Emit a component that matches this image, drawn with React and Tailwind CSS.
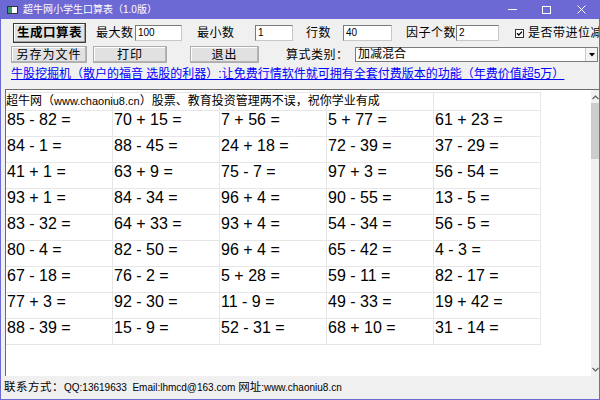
import React from "react";

const rows = [
  ["85 - 82 =", "70 + 15 =", "7 + 56 =", "5 + 77 =", "61 + 23 ="],
  ["84 - 1 =", "88 - 45 =", "24 + 18 =", "72 - 39 =", "37 - 29 ="],
  ["41 + 1 =", "63 + 9 =", "75 - 7 =", "97 + 3 =", "56 - 54 ="],
  ["93 + 1 =", "84 - 34 =", "96 + 4 =", "90 - 55 =", "13 - 5 ="],
  ["83 - 32 =", "64 + 33 =", "93 + 4 =", "54 - 34 =", "56 - 5 ="],
  ["80 - 4 =", "82 - 50 =", "96 + 4 =", "65 - 42 =", "4 - 3 ="],
  ["67 - 18 =", "76 - 2 =", "5 + 28 =", "59 - 11 =", "82 - 17 ="],
  ["77 + 3 =", "92 - 30 =", "11 - 9 =", "49 - 33 =", "19 + 42 ="],
  ["88 - 39 =", "15 - 9 =", "52 - 31 =", "68 + 10 =", "31 - 14 ="],
];

function Btn({ children, className }) {
  return (
    <div
      className={
        "flex items-center justify-center bg-[#e1e1e1] border border-[#adadad] shadow-[inset_-1px_-1px_0_#b4b4b4,inset_1px_1px_0_#fdfdfd] text-[12px] tracking-[1px] shrink-0 " +
        className
      }
    >
      {children}
    </div>
  );
}

function Input({ value, className }) {
  return (
    <div
      className={
        "h-[16px] bg-white border border-[#7a7a7a] border-b-[#c8c8c8] border-r-[#c8c8c8] text-[10px] leading-[14px] pl-[2px] shrink-0 " +
        className
      }
    >
      {value}
    </div>
  );
}

function Label({ children, className }) {
  return (
    <div className={"text-[12px] tracking-[0.5px] whitespace-nowrap shrink-0 " + className}>{children}</div>
  );
}

export default function App() {
  return (
    <div className="w-[600px] h-[400px] bg-[#f0f0f0] border-l border-r border-b border-[#6c68d4] flex flex-col overflow-hidden font-['Liberation_Sans','Noto_Sans_CJK_SC',sans-serif] text-black">
      {/* title bar */}
      <div className="h-[19px] bg-[#6c68d4] flex items-center shrink-0">
        <svg width="11" height="8" viewBox="0 0 11 8" className="ml-[6px] shrink-0">
          <rect x="0.5" y="0.5" width="10" height="7" fill="#fff" stroke="#333" />
          <rect x="1" y="1" width="4" height="6" fill="#3a9a78" />
        </svg>
        <div className="ml-[5px] text-[10px] text-white whitespace-nowrap leading-[12px]">
          超牛网小学生口算表（1.0版）
        </div>
        <div className="ml-auto flex items-center mr-[13px]">
          <div className="w-[9px] h-px bg-white" />
          <div className="ml-[25px] w-[9px] h-[8px] border border-white" />
          <svg width="9" height="9" viewBox="0 0 9 9" className="ml-[26px]">
            <path d="M0.5 0.5 L8.5 8.5 M8.5 0.5 L0.5 8.5" stroke="#fff" strokeWidth="1" />
          </svg>
        </div>
      </div>

      {/* row 1 */}
      <div className="mt-[4px] h-[20px] flex items-center shrink-0">
        <div className="ml-[12px] w-[73px] h-[20px] border border-[#3a3a3a] bg-[#e1e1e1] shadow-[inset_-1px_-1px_0_#a0a0a0,inset_1px_1px_0_#fdfdfd] flex items-center justify-center text-[12.5px] font-bold tracking-[0.5px] shrink-0">
          生成口算表
        </div>
        <Label className="ml-[10px] w-[39px]">最大数</Label>
        <Input value="100" className="w-[47px]" />
        <Label className="ml-[15px] w-[58px]">最小数</Label>
        <Input value="1" className="w-[38px]" />
        <Label className="ml-[13px] w-[37px]">行数</Label>
        <Input value="40" className="w-[49px]" />
        <Label className="ml-[14px] w-[50px]">因子个数</Label>
        <Input value="2" className="w-[43px]" />
        <svg width="9" height="9" viewBox="0 0 9 9" className="ml-[16px] shrink-0">
          <rect x="0.5" y="0.5" width="8" height="8" fill="#fff" stroke="#333" />
          <path d="M2 4.2 L3.8 6 L7 2.6" stroke="#000" strokeWidth="1.3" fill="none" />
        </svg>
        <Label className="ml-[4px]">是否带进位减</Label>
      </div>

      {/* row 2 */}
      <div className="mt-[3px] h-[17px] flex items-center shrink-0">
        <Btn className="ml-[10px] w-[76px] h-[17px]">另存为文件</Btn>
        <Btn className="ml-[6px] w-[74px] h-[17px]">打印</Btn>
        <Btn className="ml-[23px] w-[69px] h-[17px]">退出</Btn>
        <Label className="ml-[27px] w-[69px]">算式类别：</Label>
        <div className="w-[243px] h-[15px] bg-white border border-[#7a7a7a] flex items-center shrink-0">
          <div className="pl-[2px] text-[12px] leading-[13px] flex-1">加减混合</div>
          <div className="w-[12px] h-full bg-[#f4f4f4] border-l border-[#c8c8c8] flex items-center justify-center">
            <svg width="6" height="4" viewBox="0 0 6 4">
              <path d="M0 0 L6 0 L3 3.5 Z" fill="#000" />
            </svg>
          </div>
        </div>
      </div>

      {/* link row */}
      <div className="mt-[3px] h-[15px] flex items-center shrink-0">
        <div className="ml-[10px] text-[12px] leading-[14px] text-[#0000ff] underline whitespace-nowrap">
          牛股挖掘机（散户的福音 选股的利器）:让免费行情软件就可拥有全套付费版本的功能（年费价值超5万）
        </div>
      </div>

      {/* content */}
      <div className="mt-[8px] ml-[4px] h-[287px] w-[594px] border-t border-l border-[#6d6d6d] bg-white flex shrink-0">
        <div className="flex-1 pt-[2px]">
          <div className="w-[535px] border-t border-[#e6e6e6]">
            <div className="grid grid-cols-[107px_107px_107px_107px_107px] h-[18px]">
              <div className="relative border-r border-b border-[#e6e6e6]">
                <div className="absolute left-0 top-0 whitespace-nowrap text-[12px] leading-[17px] z-10">
                  超牛网（<span className="text-[11px]">www.chaoniu8.cn</span>）股票、教育投资管理两不误，祝你学业有成
                </div>
              </div>
              <div className="border-r border-b border-[#e6e6e6]" />
              <div className="border-r border-b border-[#e6e6e6]" />
              <div className="border-r border-b border-[#e6e6e6]" />
              <div className="border-r border-b border-[#e6e6e6]" />
            </div>
            {rows.map((r, i) => (
              <div key={i} className="grid grid-cols-[107px_107px_107px_107px_107px] h-[26px]">
                {r.map((c, j) => (
                  <div
                    key={j}
                    className="border-r border-b border-[#e6e6e6] text-[16px] leading-[18px] pl-[1px] whitespace-nowrap"
                  >
                    {c}
                  </div>
                ))}
              </div>
            ))}
          </div>
        </div>
        {/* scrollbar */}
        <div className="w-[8px] bg-[#f0f0f0] flex flex-col items-center">
          <svg width="7" height="5" viewBox="0 0 7 5" className="mt-[5px]">
            <path d="M0.5 4 L3.5 1 L6.5 4" stroke="#606060" strokeWidth="1.2" fill="none" />
          </svg>
          <div className="mt-[3px] w-[8px] h-[56px] bg-[#cdcdcd]" />
          <div className="flex-1" />
          <svg width="7" height="5" viewBox="0 0 7 5" className="mb-[4px]">
            <path d="M0.5 1 L3.5 4 L6.5 1" stroke="#606060" strokeWidth="1.2" fill="none" />
          </svg>
        </div>
      </div>

      {/* status bar */}
      <div className="flex-1 flex items-center pl-[3px] whitespace-nowrap">
        <span className="text-[11.5px] tracking-[0.5px]">联系方式：</span>
        <span className="text-[10px]">QQ:13619633&nbsp;&nbsp;Email:lhmcd@163.com&nbsp;</span>
        <span className="text-[11.5px]">网址</span>
        <span className="text-[10px]">:www.chaoniu8.cn</span>
      </div>
    </div>
  );
}
